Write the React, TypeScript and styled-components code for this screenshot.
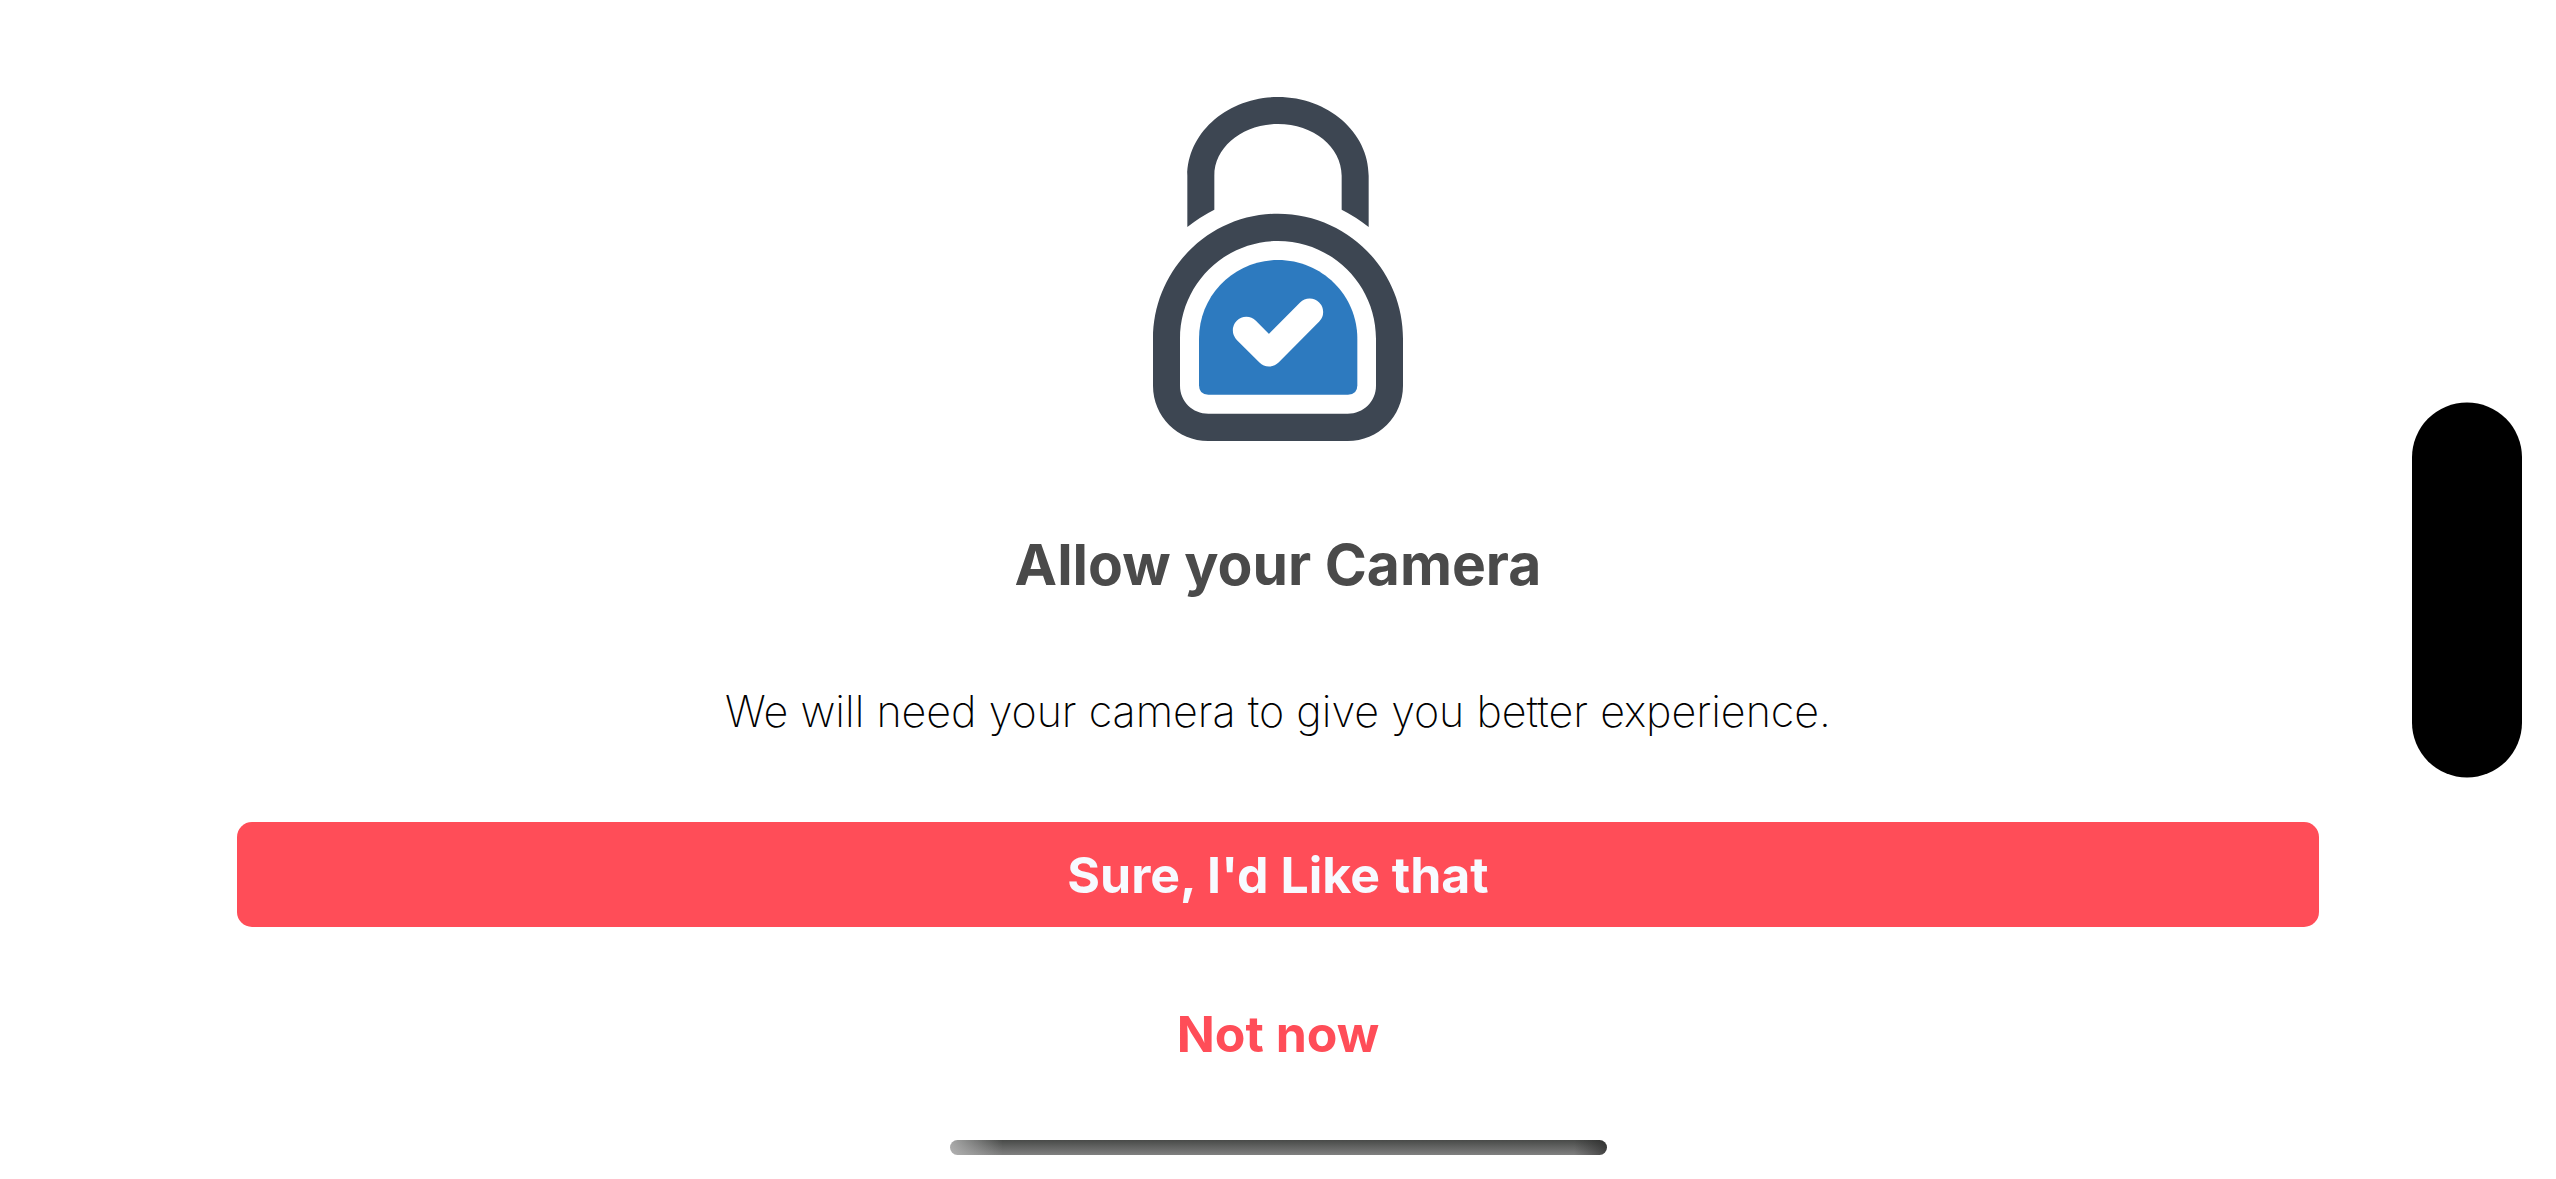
import React from "react";
import styled, { createGlobalStyle } from "styled-components";

const Global = createGlobalStyle`
  * { box-sizing: border-box; }
  body { margin: 0; background: #fff; font-family: Inter, "Liberation Sans", sans-serif; }
`;
const Screen = styled.main`
  position: relative;
  min-height: 100vh;
  display: flex;
  flex-direction: column;
  align-items: center;
  padding: 97px 237px 24px;
`;
const LockIcon = styled.svg`
  width: 250px;
  height: 344px;
`;
const Title = styled.h1`
  margin: 88px 0 82px;
  font-size: 57px;
  line-height: 72px;
  font-weight: 700;
  color: #4a4a4a;
`;
const Message = styled.p`
  margin: 0;
  font-size: 43px;
  line-height: 56px;
  font-weight: 200;
  font-variant-ligatures: none;
  color: #000;
`;
const Actions = styled.div`
  align-self: stretch;
  display: flex;
  flex-direction: column;
  gap: 54px;
  margin: 83px 0 54px;
`;
const Button = styled.button<{ $filled?: boolean }>`
  font: 700 50px/61px Inter, "Liberation Sans", sans-serif;
  border: 0;
  border-radius: 15px;
  cursor: pointer;
  padding: 23px 32px 21px;
  color: ${p => (p.$filled ? "#f7faff" : "#ff4d58")};
  background: ${p => (p.$filled ? "#ff4d58" : "transparent")};
`;
const HomeIndicator = styled.div`
  width: 657px;
  max-width: 100%;
  height: 15px;
  border-radius: 8px;
  margin-top: auto;
  background:
    linear-gradient(90deg, rgba(190, 190, 190, 0.8), rgba(190, 190, 190, 0) 8%),
    linear-gradient(270deg, rgba(30, 30, 30, 0.6), rgba(30, 30, 30, 0) 5%),
    linear-gradient(180deg, #484a48, #808080);
`;
const Island = styled.div`
  position: absolute;
  right: 34px;
  top: 50%;
  transform: translateY(-50%);
  width: 110px;
  height: 375px;
  border-radius: 55px;
  background: #000;
`;

export default function App() {
  return (
    <Screen>
      <Global />
      <LockIcon viewBox="69 52 750 1032" role="img" aria-label="Secure lock">
        <path
          fill="#3d4652"
          d="M172 442V288C172 158 294 52 444 52S716 158 716 288V442Q677 411 635 390V288C635 202 550 133 444 133S253 202 253 288V390Q211 411 172 442Z"
        />
        <path
          fill="#3d4652"
          fillRule="evenodd"
          d="M444 402C651 402 819 570 819 777V918C819 1010 745 1084 653 1084H235C143 1084 69 1010 69 918V777C69 570 237 402 444 402ZM444 484C282 484 150 615 150 777V918C150 965 188 1002 235 1002H653C700 1002 738 965 738 918V777C738 615 606 484 444 484Z"
        />
        <path
          fill="#2d7abf"
          d="M444 541C575 541 682 646 682 777V917Q682 945 654 945H235Q207 945 207 917V777C207 646 313 541 444 541Z"
        />
        <path
          d="M349 752L417 820L539 697"
          fill="none"
          stroke="#fff"
          strokeWidth="81"
          strokeLinecap="round"
          strokeLinejoin="round"
        />
      </LockIcon>
      <Title>Allow your Camera</Title>
      <Message>We will need your camera to give you better experience.</Message>
      <Actions>
        <Button type="button" $filled>Sure, I'd Like that</Button>
        <Button type="button">Not now</Button>
      </Actions>
      <HomeIndicator />
      <Island />
    </Screen>
  );
}
